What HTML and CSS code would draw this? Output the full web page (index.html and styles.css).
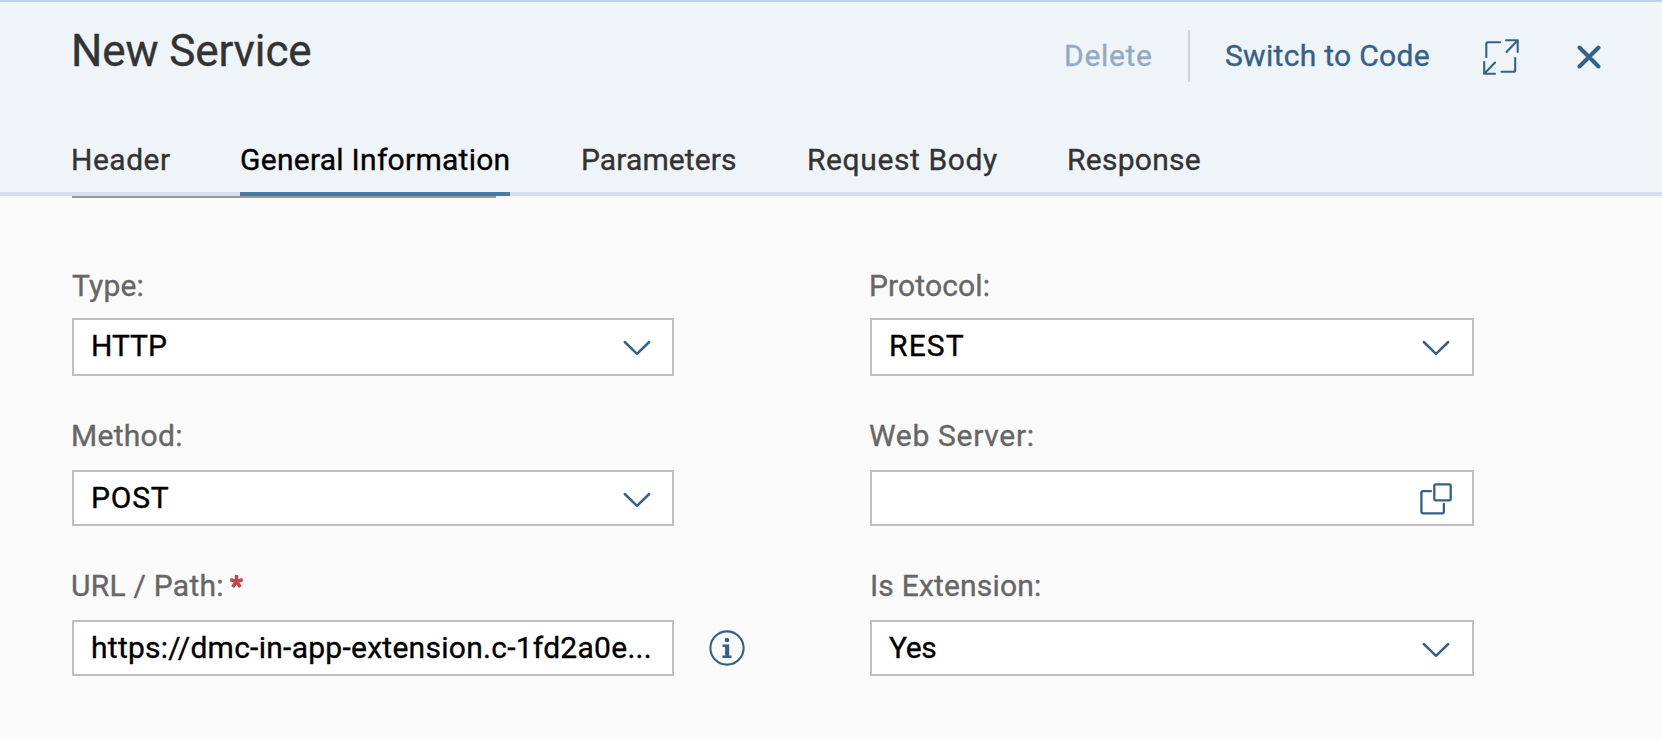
FILE: index.html
```
<!DOCTYPE html>
<html lang="en">
<head>
<meta charset="utf-8">
<title>New Service</title>
<link rel="stylesheet" href="styles.css">
</head>
<body>
<header class="header">
  <div class="bar">
    <h1 class="title">New Service</h1>
    <div class="actions">
      <button class="btn btn-delete" disabled>Delete</button>
      <span class="separator"></span>
      <button class="btn btn-switch">Switch to Code</button>
      <button class="btn btn-expand" aria-label="Full screen">
        <svg width="36" height="36" viewBox="0 0 36 36" fill="none" stroke="currentColor" stroke-width="2.1" stroke-linecap="round" stroke-linejoin="round"><path d="M3.3 18V5Q3.3 3.2 5 3.2H17M23 1.3H34.7V13M34.3 1.7L23.5 13M1.2 23V34.8H12M1.6 34.4L12 23.5M32.2 19V31Q32.2 32.8 30.5 32.8H18.5"/></svg>
      </button>
      <button class="btn btn-close" aria-label="Close">
        <svg width="24" height="24" viewBox="0 0 24 24" fill="none" stroke="currentColor" stroke-width="4" stroke-linecap="round"><path d="M2.5 2.5L21.5 21.5M21.5 2.5L2.5 21.5"/></svg>
      </button>
    </div>
  </div>
  <nav class="tabs">
    <a class="tab tab-header">Header</a>
    <a class="tab tab-general active">General Information</a>
    <a class="tab tab-parameters">Parameters</a>
    <a class="tab tab-body">Request Body</a>
    <a class="tab tab-response">Response</a>
  </nav>
</header>
<div class="scroll-line"></div>
<main class="form">
  <div class="field first">
    <label class="label type">Type:</label>
    <div class="input"><span class="value">HTTP</span><svg class="chevron" width="28" height="16" viewBox="0 0 28 16"><path d="M1.8 2L14 13.8L26.2 2"/></svg></div>
  </div>
  <div class="field first right">
    <label class="label protocol">Protocol:</label>
    <div class="input"><span class="value rest">REST</span><svg class="chevron" width="28" height="16" viewBox="0 0 28 16"><path d="M1.8 2L14 13.8L26.2 2"/></svg></div>
  </div>
  <div class="field">
    <label class="label method">Method:</label>
    <div class="input"><span class="value post">POST</span><svg class="chevron" width="28" height="16" viewBox="0 0 28 16"><path d="M1.8 2L14 13.8L26.2 2"/></svg></div>
  </div>
  <div class="field right">
    <label class="label server">Web Server:</label>
    <div class="input"><span class="value"></span><svg class="value-help" width="32" height="32" viewBox="0 0 32 32"><rect x="14.3" y="1.3" width="16.4" height="16" rx="1.6"/><path d="M11 8.2H3.2Q1.4 8.2 1.4 10V28.5Q1.4 30.4 3.2 30.4H22Q23.9 30.4 23.9 28.5V21"/></svg></div>
  </div>
  <div class="field">
    <label class="label path">URL / Path:<svg class="required" width="15" height="15" viewBox="0 0 14 14"><path d="M7 7V1M7 7L1.2 5.2M7 7L12.8 5.2M7 7L3.4 12.2M7 7L10.6 12.2"/></svg></label>
    <div class="input-row">
      <div class="input"><span class="value url">https://dmc-in-app-extension.c-1fd2a0e...</span></div>
      <svg class="info" width="36" height="36" viewBox="0 0 36 36"><circle class="ring" cx="18" cy="18" r="16.6"/><circle cx="18" cy="10" r="2.3"/><path d="M13.6 14.5H20.2V25.5H22.5V28H13.4V25.5H16.1V17H13.6Z"/></svg>
    </div>
  </div>
  <div class="field right">
    <label class="label extension">Is Extension:</label>
    <div class="input"><span class="value yes">Yes</span><svg class="chevron" width="28" height="16" viewBox="0 0 28 16"><path d="M1.8 2L14 13.8L26.2 2"/></svg></div>
  </div>
</main>
</body>
</html>
```
FILE: styles.css
```
* { box-sizing: border-box; }

body {
  margin: 0;
  height: 740px;
  overflow: hidden;
  background: #fafafa;
  color: #000;
  font: 30px/40px Roboto, "Noto Sans", sans-serif;
  -webkit-text-stroke: .35px currentColor;
}

/* Header */
.header {
  height: 196px;
  border-top: 2px solid #bfd1e8;
  border-bottom: 4px solid #d3dff0;
  background: #eff4f9;
  color: #32363a;
}
.bar {
  height: 114px;
  padding: 23px 61px 0 71px;
  display: flex;
  justify-content: space-between;
  align-items: flex-start;
}
.title {
  margin: 0;
  color: #333;
  font-size: 44px;
  font-weight: 400;
  line-height: 52px;
  letter-spacing: -.12px;
}
.actions {
  display: flex;
  align-items: center;
  height: 52px;
  margin-top: 5px;
  color: #346187;
}
.btn {
  padding: 0;
  border: 0;
  background: none;
  color: #346187;
  font: inherit;
  line-height: 40px;
  white-space: nowrap;
}
.btn svg { display: block; }
.btn-delete { width: 88px; color: #94aac2; letter-spacing: .7px; text-align: left; }
.separator { width: 2px; height: 52px; margin: 0 35px 0 36px; background: #ccd2d8; }
.btn-switch { width: 208px; margin-right: 50px; letter-spacing: .3px; text-align: left; }
.btn-expand { margin: 1px 58px 0 0; }
.btn-close { margin-top: 1px; }

/* Tabs */
.tabs {
  height: 80px;
  padding: 24px 0 0 72px;
  display: flex;
  color: #333;
}
.tab { height: 56px; white-space: nowrap; }
.tab-header { width: 168px; text-indent: -1px; letter-spacing: .51px; }
.tab-general { width: 270px; margin-right: 71px; letter-spacing: .27px; }
.tab-parameters { width: 226px; letter-spacing: .1px; }
.tab-body { width: 260px; letter-spacing: .6px; }
.tab-response { letter-spacing: .27px; }
.tab.active { border-bottom: 4px solid #427cac; color: #000; }

.scroll-line {
  height: 2px;
  background: linear-gradient(#999, #999) 72px 0 / 424px 2px no-repeat #f3f3f3;
}

/* Form */
.form {
  padding: 68px 0 0 72px;
  display: grid;
  grid-template-columns: 602px 604px;
  grid-auto-rows: 110px;
  gap: 40px 196px;
}
.field {
  display: flex;
  flex-direction: column;
  justify-content: space-between;
}
.label { display: flex; color: #666; white-space: nowrap; }
.type { letter-spacing: .2px; }
.protocol { margin-left: -1px; letter-spacing: .14px; }
.method { margin-left: -1px; letter-spacing: .29px; }
.server { margin-left: -1px; letter-spacing: .69px; }
.path { margin-left: -1px; letter-spacing: .25px; }
.extension { letter-spacing: .19px; }
.required {
  margin: 8px 0 0 5px;
  fill: none;
  stroke: #c14646;
  stroke-width: 3.2;
}
.input {
  width: 100%;
  height: 56px;
  padding: 0 21px 0 17px;
  border: 2px solid #bfbfbf;
  background: #fff;
  display: flex;
  align-items: center;
  justify-content: space-between;
  flex-shrink: 0;
}
.right .input { padding-right: 22px; }
.first .input { height: 58px; padding-bottom: 2px; }
.value { white-space: nowrap; }
.post { letter-spacing: .81px; }
.rest { letter-spacing: 1.15px; }
.yes { letter-spacing: -.3px; }
.url { letter-spacing: .27px; }
.chevron {
  margin-top: 4px;
  fill: none;
  stroke: #346187;
  stroke-width: 2.5;
  stroke-linecap: round;
  stroke-linejoin: round;
}
.value-help { margin: 2px -2px 0 0; fill: none; stroke: #346187; stroke-width: 2.3; stroke-linecap: round; }
.input-row { display: flex; align-items: center; gap: 36px; }
.info { flex-shrink: 0; margin-left: -1px; fill: #346187; }
.ring { fill: none; stroke: #346187; stroke-width: 2.1; }
```
